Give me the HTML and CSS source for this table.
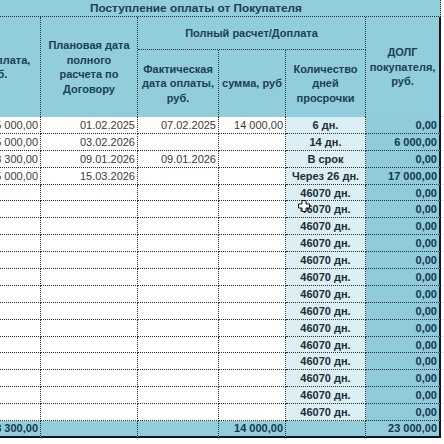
FILE: index.html
```html
<!DOCTYPE html>
<html lang="ru">
<head>
<meta charset="utf-8">
<title>Поступление оплаты от Покупателя</title>
<link rel="stylesheet" href="styles.css">
</head>
<body>
<div class="viewport">
  <div class="sheet">
    <div class="c h title">Поступление оплаты от Покупателя</div>
    <div class="c x x1"></div>

    <div class="c h tall hc1">Предоплата,<br>руб.</div>
    <div class="c h tall hc2">Плановая дата<br>полного<br>расчета по<br>Договору</div>
    <div class="c h group">Полный расчет/Доплата</div>
    <div class="c h tall hc6 last">ДОЛГ<br>покупателя,<br>руб.</div>
    <div class="c x x2"></div>
    <div class="c h sub hc3">Фактическая<br>дата оплаты,<br>руб.</div>
    <div class="c h sub hc4">сумма, руб</div>
    <div class="c h sub hc5">Количество<br>дней<br>просрочки</div>

    <div class="c num">15 000,00</div><div class="c num">01.02.2025</div><div class="c num">07.02.2025</div><div class="c num">14 000,00</div><div class="c late">6 дн.</div><div class="c debt last">0,00</div><div class="c x"></div>
    <div class="c num">15 000,00</div><div class="c num">03.02.2026</div><div class="c num"></div><div class="c num"></div><div class="c late">14 дн.</div><div class="c debt last">6 000,00</div><div class="c x"></div>
    <div class="c num">3 300,00</div><div class="c num">09.01.2026</div><div class="c num">09.01.2026</div><div class="c num"></div><div class="c late">В срок</div><div class="c debt last">0,00</div><div class="c x"></div>
    <div class="c num">15 000,00</div><div class="c num">15.03.2026</div><div class="c num"></div><div class="c num"></div><div class="c late">Через 26 дн.</div><div class="c debt last">17 000,00</div><div class="c x"></div>
    <div class="c num"></div><div class="c num"></div><div class="c num"></div><div class="c num"></div><div class="c late">46070 дн.</div><div class="c debt last">0,00</div><div class="c x"></div>
    <div class="c num"></div><div class="c num"></div><div class="c num"></div><div class="c num"></div><div class="c late">46070 дн.</div><div class="c debt last">0,00</div><div class="c x"></div>
    <div class="c num"></div><div class="c num"></div><div class="c num"></div><div class="c num"></div><div class="c late">46070 дн.</div><div class="c debt last">0,00</div><div class="c x"></div>
    <div class="c num"></div><div class="c num"></div><div class="c num"></div><div class="c num"></div><div class="c late">46070 дн.</div><div class="c debt last">0,00</div><div class="c x"></div>
    <div class="c num"></div><div class="c num"></div><div class="c num"></div><div class="c num"></div><div class="c late">46070 дн.</div><div class="c debt last">0,00</div><div class="c x"></div>
    <div class="c num"></div><div class="c num"></div><div class="c num"></div><div class="c num"></div><div class="c late">46070 дн.</div><div class="c debt last">0,00</div><div class="c x"></div>
    <div class="c num"></div><div class="c num"></div><div class="c num"></div><div class="c num"></div><div class="c late">46070 дн.</div><div class="c debt last">0,00</div><div class="c x"></div>
    <div class="c num"></div><div class="c num"></div><div class="c num"></div><div class="c num"></div><div class="c late">46070 дн.</div><div class="c debt last">0,00</div><div class="c x"></div>
    <div class="c num"></div><div class="c num"></div><div class="c num"></div><div class="c num"></div><div class="c late">46070 дн.</div><div class="c debt last">0,00</div><div class="c x"></div>
    <div class="c num"></div><div class="c num"></div><div class="c num"></div><div class="c num"></div><div class="c late">46070 дн.</div><div class="c debt last">0,00</div><div class="c x"></div>
    <div class="c num"></div><div class="c num"></div><div class="c num"></div><div class="c num"></div><div class="c late">46070 дн.</div><div class="c debt last">0,00</div><div class="c x"></div>
    <div class="c num"></div><div class="c num"></div><div class="c num"></div><div class="c num"></div><div class="c late">46070 дн.</div><div class="c debt last">0,00</div><div class="c x"></div>
    <div class="c num"></div><div class="c num"></div><div class="c num"></div><div class="c num"></div><div class="c late">46070 дн.</div><div class="c debt last">0,00</div><div class="c x"></div>
    <div class="c num"></div><div class="c num"></div><div class="c num"></div><div class="c num"></div><div class="c late">46070 дн.</div><div class="c debt last">0,00</div><div class="c x"></div>

    <div class="c tot">48 300,00</div><div class="c tot"></div><div class="c tot"></div><div class="c tot">14 000,00</div><div class="c tot"></div><div class="c tot last">23 000,00</div><div class="c x totx"></div>
  </div>
  <svg class="cursor" width="14" height="14" viewBox="0 0 14 14" aria-hidden="true">
    <path d="M5 1.5h4v3.5h3.5v4h-3.5v3.5h-4v-3.5h-3.5v-4h3.5z" fill="#fff" stroke="#111" stroke-width="1"/>
  </svg>
</div>
</body>
</html>
```
FILE: styles.css
```css
* { box-sizing: border-box; margin: 0; padding: 0; }
html, body { width: 444px; height: 444px; overflow: hidden; background: #fff; }
body { font-family: "Liberation Sans", Arial, sans-serif; font-size: 11px; }

.viewport { position: relative; width: 444px; height: 444px; overflow: hidden; background: #fff; }

.sheet {
  display: grid;
  margin-left: -48px;
  width: 492px;
  grid-template-columns: 89px 97px 81px 67px 80px 75px 3px;
  grid-template-rows: 17px 33px 67px repeat(18, 16.9px) 16.8px;
}

.c {
  display: flex;
  align-items: center;
  padding: 0 2px;
  white-space: nowrap;
  color: #3c3c3c;
  border-right: 1px dotted #2e2e2e;
  border-bottom: 1px dotted #2e2e2e;
  overflow: hidden;
}

.h {
  background: #92cddc;
  color: #1a4154;
  font-weight: bold;
  justify-content: center;
  text-align: center;
  white-space: normal;
  line-height: 14.5px;
}
.title { grid-column: 1 / 7; grid-row: 1; font-size: 11.8px; }
.x1 { grid-column: 7; grid-row: 1; }
.x2 { grid-column: 7; grid-row: 2 / 4; }
.tall { grid-row: 2 / 4; border-bottom: none; }
.hc1 { grid-column: 1; }
.hc2 { grid-column: 2; }
.hc6 { grid-column: 6; }
.group { grid-column: 3 / 6; grid-row: 2; }
.sub { grid-row: 3; border-bottom: none; }
.hc3 { grid-column: 3; }
.hc4 { grid-column: 4; }
.hc5 { grid-column: 5; }

.last { border-right: 2px solid #151515; }

.x { border-right: none; border-bottom: 1px solid #e4e4e4; background: #fff; padding: 0; }

.num { justify-content: flex-end; background: #fff; }
.late { justify-content: center; background: #daeef3; font-weight: bold; color: #1c2d37; }
.debt { justify-content: flex-end; background: #8fcbdb; font-weight: bold; color: #15384a; }

.tot {
  justify-content: flex-end;
  background: #92cddc;
  font-weight: bold;
  color: #16384a;
  border-bottom: 2px solid #151515;
}
.totx { border-bottom: none; }

.cursor { position: absolute; left: 297px; top: 199px; }
```
